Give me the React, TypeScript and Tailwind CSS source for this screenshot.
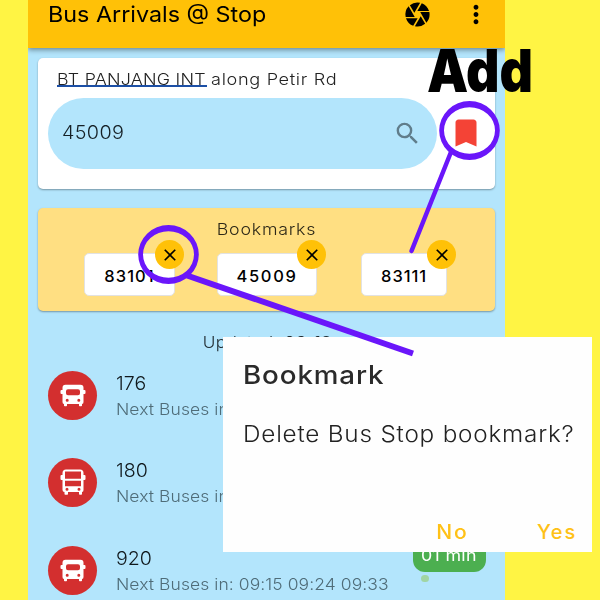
import React from "react";
import { MdBookmark, MdCamera, MdClose, MdMoreVert, MdSearch } from "react-icons/md";

function BusIcon({ double = false }: { double?: boolean }) {
  return double ? (
    <svg viewBox="0 0 26 27" className="h-[27px] w-[26px]" fill="#fff">
      <path
        fillRule="evenodd"
        d="M6 0.5h14q3.500 0 3.500 3.500V6h1q1 0 1 1v3q0 1-1 1h-1v10q0 2-1.500 2v2q0 .8-.8.8h-1.400q-.8 0-.8-.8v-2h-11v2q0 .8-.8.8H5.300q-.8 0-.8-.8v-2Q2.500 23 2.500 21V11h-1q-1 0-1-1V7q0-1 1-1h1V4q0-3.500 3.500-3.500zM5 2.600v7.200h16V2.600zM5 11.800v5.500h16v-5.500zM7 18.800a1.500 1.500 0 100 3 1.500 1.500 0 000-3zM19 18.800a1.500 1.500 0 100 3 1.500 1.500 0 000-3z"
      />
    </svg>
  ) : (
    <svg viewBox="0 0 26 23" className="h-[23px] w-[26px]" fill="#fff">
      <path
        fillRule="evenodd"
        d="M5.500 .8h15q3 0 3 3V6h1q1 0 1 1v2q0 1-1 1h-1v8q0 2-1.500 2v1.500q0 .8-.8.8h-1.400q-.8 0-.8-.8V20h-12v1.500q0 .8-.8.8H4.800q-.8 0-.8-.8V20Q2.500 20 2.500 18v-8h-1q-1 0-1-1V7q0-1 1-1h1V3.800q0-3 3-3zM8 5.200q-2 0-2 2v2q0 2 2 2h10q2 0 2-2v-2q0-2-2-2zM7.200 14.800a1.500 1.500 0 100 3 1.500 1.500 0 000-3zM18.800 14.800a1.500 1.500 0 100 3 1.500 1.500 0 000-3z"
      />
    </svg>
  );
}

function Chip({ code, box }: { code: string; box: string }) {
  return (
    <div
      className={`relative flex h-[43px] items-center justify-center rounded-[5px] border border-[#e2e2e2] bg-white pt-[3px] text-[16.500px] font-medium text-black ${box}`}
    >
      {code}
      <span className="absolute -top-[14px] -right-[10px] flex h-[29px] w-[29px] items-center justify-center rounded-full bg-[#ffc107] tracking-normal">
        <MdClose className="h-[20px] w-[20px]" />
      </span>
    </div>
  );
}

function BusRow({ no, times, double, children }: { no: string; times: string; double?: boolean; children?: React.ReactNode }) {
  return (
    <div className="relative flex h-[87.250px] pl-5">
      <div className="flex h-[49px] w-[49px] shrink-0 items-center justify-center rounded-full bg-[#d32f2f]">
        <BusIcon double={double} />
      </div>
      <div className="pl-[18.500px] whitespace-nowrap">
        <div className="h-[25px] origin-left scale-x-[1.060] text-[18.500px] leading-[25px] font-light text-[#10181c]">{no}</div>
        <div className="h-[25px] origin-left scale-x-[1.060] text-[16.500px] leading-[26px] font-light tracking-[0.070px] text-[#4f6c78]">Next Buses in: {times}</div>
      </div>
      {children}
    </div>
  );
}

export default function App() {
  return (
    <div className="relative h-[600px] w-[600px] overflow-hidden bg-[#fff444] pl-7 font-['Inter','Noto_Sans',sans-serif]">
      <div className="h-[600px] w-[477px] overflow-hidden bg-[#b3e5fc]">
        <header className="relative flex h-12 items-start justify-between bg-[#ffc107] pl-5 shadow-[0_2px_5px_rgba(0,0,0,0.4)]">
          <h1 className="h-7 origin-left scale-x-[1.060] text-[22px] leading-[28px] font-normal whitespace-nowrap text-black">Bus Arrivals @ Stop</h1>
          <div className="flex pr-[14px]">
            <MdCamera className="mr-[29px] h-[29px] w-[29px]" />
            <MdMoreVert className="h-[29px] w-[30px]" />
          </div>
        </header>
        <section className="mx-[10px] mt-[10px] h-[131px] rounded-[5px] bg-white pt-[8px] shadow-[0_1px_2px_rgba(0,0,0,0.35)]">
          <p className="flex h-[31.500px] pl-[19px] text-[16.500px] leading-[26px] font-light whitespace-nowrap text-[#222]">
            <span className="h-[21px] w-[150px] border-b-2 border-[#1c4fa5]">
              <span className="inline-block origin-left scale-x-[1.080] tracking-[0.230px]">BT PANJANG INT</span>
            </span>
            <span className="ml-[4px] origin-left scale-x-[1.100] tracking-[0.600px]">along Petir Rd</span>
          </p>
          <div className="flex items-center pl-[10px]">
            <div className="flex h-[71.500px] w-[389px] items-center justify-between rounded-full bg-[#b3e5fc] pr-[15px] pl-[14px]">
              <span className="origin-left scale-x-[1.070] text-[18.500px] font-light tracking-[0.300px] text-[#152026]">45009</span>
              <MdSearch className="h-[29px] w-[29px] text-[#607d8b]" />
            </div>
            <MdBookmark className="ml-[11px] h-[36px] w-[36px] text-[#f44336]" />
          </div>
        </section>
        <section className="mx-[10px] mt-[19px] h-[103px] rounded-[5px] bg-[#ffdf82] shadow-[0_1px_2px_rgba(0,0,0,0.35)]">
          <h2 className="h-[45px] scale-x-[1.080] text-center text-[16.500px] leading-[43px] font-light tracking-[0.700px] text-[#2c2717]">Bookmarks</h2>
          <div className="flex pl-[46px]">
            <Chip code="83101" box="w-[91px] tracking-[1.100px]" />
            <Chip code="45009" box="ml-[42px] w-[100px] tracking-[1.700px]" />
            <Chip code="83111" box="ml-[44px] w-[86px] tracking-[0.900px]" />
          </div>
        </section>
        <p className="h-[60px] origin-left scale-x-[1.040] pt-[18px] pl-[168px] text-[16.500px] leading-[26px] font-light tracking-[0.400px] whitespace-nowrap text-[#202c32]">
          Updated: <b className="font-semibold">09:13</b>
        </p>
        <BusRow no="176" times="09:15" />
        <BusRow no="180" times="09:19" double />
        <BusRow no="920" times="09:15 09:24 09:33">
          <div className="absolute -top-[10.500px] left-[385px] flex h-[37px] w-[72.500px] items-end justify-center rounded-[12px] bg-[#4caf50] pb-[6px] text-[16.500px] leading-[22px] text-white">
            <span className="scale-x-[1.080] tracking-[0.300px]">01 min</span>
          </div>
          <div className="absolute top-[29px] left-[393px] h-[7.500px] w-[7.500px] rounded-full bg-[#a1d5a3]" />
        </BusRow>
      </div>

      <div className="absolute top-[337px] left-[223px] h-[215px] w-[369px] bg-[#fefefe] whitespace-nowrap">
        <h3 className="ml-[20px] h-[80px] origin-left scale-x-[1.110] pt-[20px] text-[25px] leading-[36px] font-medium tracking-[0.800px] text-[#2a2a2a]">Bookmark</h3>
        <p className="ml-[20px] h-[99px] origin-left scale-x-[1.080] text-[22.500px] leading-[34px] font-light tracking-[0.730px] text-[#222]">Delete Bus Stop bookmark?</p>
        <div className="flex justify-end pr-[15px] text-[20px] leading-[32px] font-medium tracking-[1.800px] text-[#ffc117]">
          <span className="scale-x-[1.050]">No</span>
          <span className="ml-[69px]">Yes</span>
        </div>
      </div>

      <svg className="absolute inset-0 h-[600px] w-[600px] blur-[0.400px]" viewBox="0 0 600 600" fill="#6a16fa" stroke="none">
        <path
          fillRule="evenodd"
          d="M439.200 130.500a30.300 29.500 0 1 0 60.600 0a30.300 29.500 0 1 0-60.600 0zM444 130.500a25.500 23.300 0 1 1 51 0a25.500 23.300 0 1 1-51 0z"
        />
        <path
          fillRule="evenodd"
          d="M138.200 254.500a30.300 29.500 0 1 0 60.600 0a30.300 29.500 0 1 0-60.600 0zM143 254.500a25.500 23.300 0 1 1 51 0a25.500 23.300 0 1 1-51 0z"
        />
        <path d="M451 152L411.500 251" stroke="#6a16fa" strokeWidth="4.500" strokeLinecap="round" />
        <path d="M187 275.500L413 353.500" stroke="#6a16fa" strokeWidth="6" />
      </svg>
      <div className="absolute top-[36px] left-[427px] origin-left scale-x-[0.880] text-[59px] leading-[70px] font-black text-black">Add</div>
    </div>
  );
}
